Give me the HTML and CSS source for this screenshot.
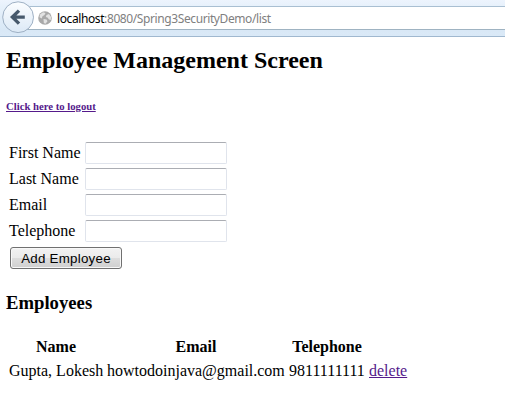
FILE: index.html
```
<!DOCTYPE html>
<html lang="en">
<head>
<meta charset="utf-8">
<title>Employee Management Screen</title>
<link rel="stylesheet" href="styles.css">
</head>
<body>
<header class="toolbar">
  <div class="address">
    <svg class="globe" viewBox="0 0 14 14"><circle cx="7" cy="7" r="6.8" fill="#a9a9a9"/><path d="M2 3.5L5 1.3 7.5 2 6.5 4 4.5 5.2 3.8 7.5 1.5 6.2ZM8.5 4L11 3 13 6 12.8 9 11 8.5 9.5 6.5 7.8 6ZM5.5 8L8.5 8.5 9.5 10.2 7.5 12.8 5.8 12Z" fill="#e2e2e2"/></svg>
    <span class="url"><b class="host">localhost</b>:8080/Spring3SecurityDemo/list</span>
  </div>
  <svg class="back" viewBox="0 0 34 34">
    <defs><linearGradient id="disc" x1="0" y1="0" x2="0" y2="1"><stop offset="0" stop-color="#fbfdff"/><stop offset="1" stop-color="#dce9f6"/></linearGradient></defs>
    <circle cx="16.1" cy="16.2" r="15.4" fill="url(#disc)" stroke="#9eb0c4"/>
    <path d="M17 9.6L10.4 16.1L17 22.6M10.5 16.1H22.8" fill="none" stroke="#47596c" stroke-width="3.4"/>
  </svg>
</header>
<main class="page">
  <h2 class="title">Employee Management Screen</h2>
  <h6 class="logout"><a href="#">Click here to logout</a></h6>
  <form class="form">
    <label for="first">First Name</label><input id="first" type="text">
    <label for="last">Last Name</label><input id="last" type="text">
    <label for="email">Email</label><input id="email" type="text">
    <label for="tel">Telephone</label><input id="tel" type="text">
    <button class="add" type="button">Add Employee</button>
  </form>
  <h3 class="subtitle">Employees</h3>
  <table class="list">
    <colgroup><col class="c-name"><col class="c-email"><col class="c-tel"><col class="c-action"></colgroup>
    <tr><th>Name</th><th>Email</th><th>Telephone</th><td></td></tr>
    <tr><td>Gupta, Lokesh</td><td>howtodoinjava@gmail.com</td><td>9811111111</td><td><a href="#">delete</a></td></tr>
  </table>
</main>
</body>
</html>
```
FILE: styles.css
```
* { box-sizing: border-box; }
body {
  margin: 0;
  background: #fff;
  color: #000;
  font: 16px/20px "Liberation Serif", "Times New Roman", serif;
  overflow: hidden;
}
a { color: #551a8b; }
.toolbar {
  position: relative;
  height: 37px;
  padding-top: 6px;
  background: linear-gradient(#edf4fd, #e7f1fb 6px, #d9e8f6 30px, #dae9f7);
  border-bottom: 1px solid #a0b8cf;
}
.address {
  display: flex;
  align-items: center;
  height: 24px;
  margin-left: 20px;
  padding-left: 18px;
  background: #fff;
  border-top: 1px solid #a9bfd2;
  border-bottom: 1px solid #9fb3c2;
}
.globe { width: 14px; height: 14px; margin-right: 5px; }
.url {
  padding-top: 2px;
  font: 12px/16px "Noto Sans", sans-serif;
  letter-spacing: -0.4px;
  color: #808080;
  white-space: nowrap;
}
.host { font-weight: normal; color: #000; }
.back { position: absolute; left: 2px; top: 1px; width: 34px; height: 34px; }
.page { padding: 0 6px; }
.title { margin: 9px 0 0; font-size: 24px; line-height: 28px; white-space: nowrap; }
.logout { margin: 26px 0 0; font-size: 10.7px; line-height: 12px; }
.form {
  display: grid;
  grid-template-columns: 74px 142px;
  grid-auto-rows: 22px;
  gap: 4px 2px;
  margin: 30px 0 0 3px;
}
.form label { line-height: 21px; }
.form input {
  width: 142px;
  height: 22px;
  background: #fff;
  border: 1px solid #e0e4ec;
  border-top-color: #abadb3;
  border-radius: 2px;
}
.add {
  grid-column: 1 / 3;
  width: 112px;
  height: 22px;
  margin: 1px 0 0 1px;
  padding: 1px 0 0;
  font: 13.33px/18px "Liberation Sans", Arial, sans-serif;
  letter-spacing: 0.25px;
  color: #000;
  background: linear-gradient(#f2f2f2, #ebebeb 48%, #dddddd 52%, #cfcfcf);
  border: 1px solid #707070;
  border-radius: 3px;
  box-shadow: inset 0 0 0 1px #f8f8f8;
}
.subtitle { margin: 24px 0 0; font-size: 18.7px; line-height: 22px; }
.list {
  width: 404px;
  margin: 20px 0 0;
  table-layout: fixed;
  border-collapse: separate;
  border-spacing: 2px;
  white-space: nowrap;
}
.list th, .list td { height: 22px; padding: 1px; line-height: 20px; }
.c-name { width: 96px; }
.c-email { width: 180px; }
.c-tel { width: 78px; }
.c-action { width: 40px; }
```
